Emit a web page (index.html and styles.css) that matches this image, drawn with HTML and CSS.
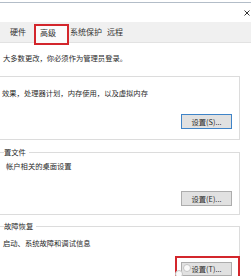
FILE: index.html
```html
<!DOCTYPE html>
<html lang="zh-CN">
<head>
  <meta charset="UTF-8" />
  <title>系统属性 - 高级</title>
  <link rel="stylesheet" href="styles.css">
</head>
<body>

<div class="titlebar">
  <svg class="close" width="6" height="6" viewBox="0 0 6 6"><path d="M0.5 0.5 L5.5 5.5 M5.5 0.5 L0.5 5.5" stroke="#333" stroke-width="1"/></svg>
</div>

<div class="tabs">
  <span class="tab first">硬件</span>
  <span class="tab active">高级</span>
  <span class="tab third">系统保护</span>
  <span class="tab last">远程</span>
</div>

<div class="panel">
  <p class="note">大多数更改，你必须作为管理员登录。</p>

  <fieldset class="group g1">
    <p>效果，处理器计划，内存使用，以及虚拟内存</p>
    <div class="actions"><button class="btn default">设置(S)...</button></div>
  </fieldset>

  <fieldset class="group g2">
    <legend>置文件</legend>
    <p>帐户相关的桌面设置</p>
    <div class="actions"><button class="btn">设置(E)...</button></div>
  </fieldset>

  <fieldset class="group g3">
    <legend>故障恢复</legend>
    <p>启动、系统故障和调试信息</p>
    <div class="actions">
      <span class="mark">
        <button class="btn">设置(T)...</button>
        <span class="touch a"></span>
        <span class="touch b"></span>
      </span>
    </div>
  </fieldset>
</div>

</body>
</html>
```

FILE: styles.css
```css
body {
  margin: 0;
  width: 251px;
  height: 276px;
  overflow: hidden;
  background: #fff;
  font-family: "Noto Sans CJK SC", "Noto Sans", sans-serif;
  font-size: 7.3px;
  color: #2a2a2a;
}

.titlebar {
  margin-top: 2px;
  height: 19px;
  border-top: 1px solid #b3bdc8;
  display: flex;
  align-items: center;
  justify-content: flex-end;
  padding-right: 1px;
}

.close {
  display: block;
}

.tabs {
  height: 20px;
  background: #f0f0f0;
  border-bottom: 1px solid #e2e2e2;
  display: flex;
  align-items: center;
  font-size: 8px;
  line-height: 10px;
}

.tab {
  display: block;
  color: #333;
}

.tab.first {
  margin-left: 10px;
}

.tab.active {
  align-self: flex-start;
  margin: 2px 0 0 8px;
  height: 15px;
  padding: 2px 11px 0 4px;
  border: 2px solid #d3262c;
  background: #fbfbfb;
}

.tab.third {
  margin-left: 1px;
}

.tab.last {
  margin-left: 5px;
}

.panel {
  margin: 0 11px 0 0;
  padding-top: 10px;
}

.note {
  margin: 0 0 0 3px;
  line-height: 10px;
  white-space: nowrap;
}

.group {
  margin: 0;
  border: 1px solid #dcdcdc;
  border-left: 0;
  padding: 0 7px 0 0;
  min-width: 0;
}

.group legend {
  margin-left: 4px;
  padding: 0 3px 0 0;
  line-height: 10px;
  white-space: nowrap;
}

.group p {
  margin: 0 0 0 3px;
  line-height: 10px;
  white-space: nowrap;
}

.g1 {
  margin-top: 13px;
  padding-bottom: 10px;
}

.g1 p {
  margin-top: 11px;
  margin-left: 2px;
}

.g1 .actions {
  margin-top: 16px;
}

.g2 {
  margin-top: 7px;
  padding-bottom: 8px;
}

.g2 p {
  margin-top: 4px;
  margin-left: 6px;
}

.g2 .actions {
  margin-top: 20px;
}

.g3 {
  margin-top: 6px;
  padding-bottom: 0;
  border-bottom: 0;
}

.g3 p {
  margin-top: 7px;
}

.g3 .actions {
  margin-top: 8px;
}

.actions {
  display: flex;
  justify-content: flex-end;
}

.btn {
  display: block;
  width: 51px;
  height: 15px;
  padding: 0;
  background: #e1e1e1;
  border: 1px solid #adadad;
  font-family: inherit;
  font-size: 7.3px;
  color: #2a2a2a;
}

.btn.default {
  border-color: #3f84c8;
}

.mark {
  position: relative;
  display: block;
  margin-right: -8px;
  padding: 4px 6px 0 4px;
  border: 2px solid #d3262c;
  border-bottom: 0;
}

.mark .btn {
  height: 14px;
}

.touch {
  position: absolute;
  width: 6px;
  height: 6px;
  border: 1px solid #c4c4c4;
  border-radius: 50%;
  background: #fafafa;
}

.touch.a {
  left: 6px;
  top: 6px;
}

.touch.b {
  left: -2px;
  top: 12px;
}
```
